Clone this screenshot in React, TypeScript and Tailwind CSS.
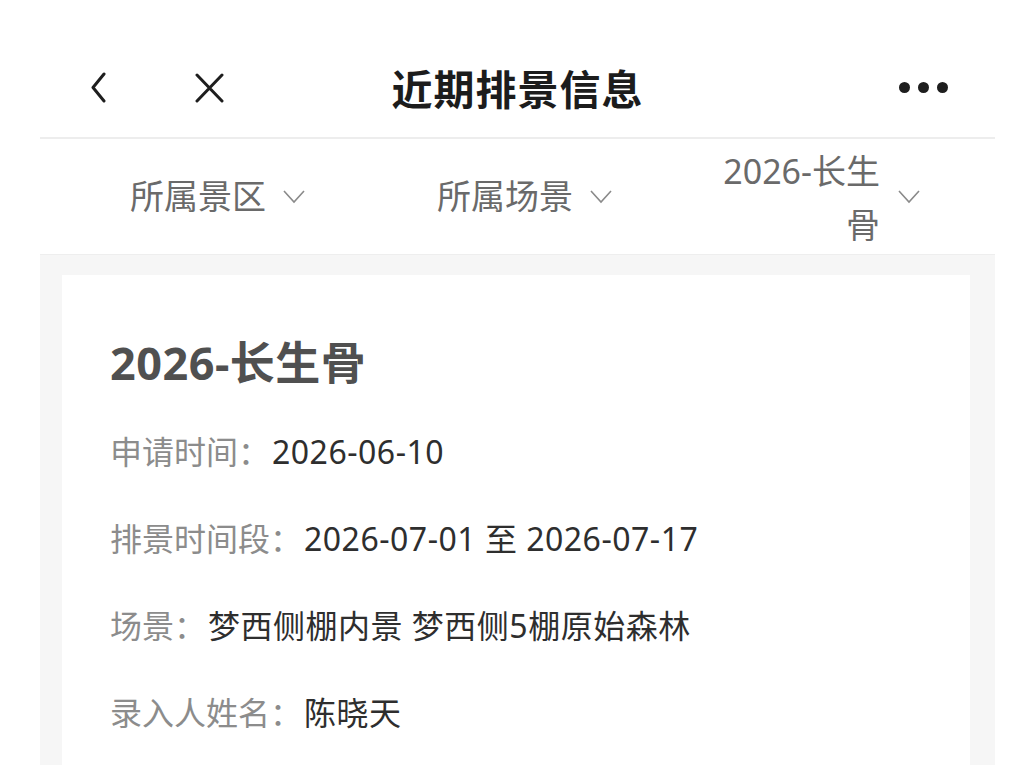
import React from "react";

const font = {
  fontFamily: '"Noto Sans", "Noto Sans CJK SC", sans-serif',
};

function Chevron() {
  return (
    <svg width="22" height="14" viewBox="0 0 22 14" className="shrink-0">
      <polyline points="1,1 11,12 21,1" fill="none" stroke="#8a8a8a" strokeWidth="1.6" />
    </svg>
  );
}

function Row({ label, value }: { label: string; value: string }) {
  return (
    <div className="flex items-center h-[87px] text-[32px] whitespace-nowrap">
      <span className="text-[#8c8c8c]">{label}</span>
      <span className="text-[#2e2e2e] ml-[2px] tracking-[0.5px]">{value}</span>
    </div>
  );
}

export default function App() {
  return (
    <div className="w-[1032px] h-[765px] bg-white overflow-hidden" style={font}>
      <div className="ml-[40px] w-[955px] flex flex-col h-full">
        {/* header */}
        <div className="relative h-[139px] flex items-center shrink-0 border-b-2 border-[#ededed]">
          <div className="flex items-center pl-[50px] gap-[88px] pt-[38px]">
            <svg width="16" height="31" viewBox="0 0 16 31">
              <polyline points="14,2 3,15.5 14,29" fill="none" stroke="#1e1e1e" strokeWidth="3" strokeLinecap="round" strokeLinejoin="round" />
            </svg>
            <svg width="31" height="30" viewBox="0 0 31 30">
              <path d="M3 2 L28 28 M28 2 L3 28" fill="none" stroke="#1e1e1e" strokeWidth="3" strokeLinecap="round" />
            </svg>
          </div>
          <div className="absolute left-0 right-0 top-[60px] text-center text-[41px] leading-[58px] tracking-[1px] font-bold text-[#1c1c1c] pointer-events-none">
            近期排景信息
          </div>
          <div className="ml-auto mr-[47px] pt-[38px] flex items-center gap-[8px]">
            <span className="w-[11px] h-[11px] rounded-full bg-[#1e1e1e]" />
            <span className="w-[11px] h-[11px] rounded-full bg-[#1e1e1e]" />
            <span className="w-[11px] h-[11px] rounded-full bg-[#1e1e1e]" />
          </div>
        </div>
        {/* filters */}
        <div className="flex h-[115px] shrink-0 text-[34px] text-[#6a6a6a]">
          <div className="flex items-center pl-[90px] gap-[17px] w-[318px]">
            <span className="whitespace-nowrap">所属景区</span>
            <Chevron />
          </div>
          <div className="flex items-center pl-[79px] gap-[17px] w-[318px]">
            <span className="whitespace-nowrap">所属场景</span>
            <Chevron />
          </div>
          <div className="flex items-center pl-[28px] gap-[18px] flex-1">
            <span className="w-[176px] text-right leading-[54px] pt-[2px]">2026-长生骨</span>
            <Chevron />
          </div>
        </div>
        {/* content area */}
        <div className="flex-1 bg-[#f6f6f6] pt-[20px] pl-[22px] pr-[25px] border-t border-[#eeeeee]">
          <div className="bg-white h-full pl-[48px] pt-[62px]">
            <div className="text-[45px] leading-[52px] tracking-[0.5px] font-bold text-[#505050] mb-[19px]">2026-长生骨</div>
            <Row label="申请时间：" value="2026-06-10" />
            <Row label="排景时间段：" value="2026-07-01 至 2026-07-17" />
            <Row label="场景：" value="梦西侧棚内景 梦西侧5棚原始森林" />
            <Row label="录入人姓名：" value="陈晓天" />
          </div>
        </div>
      </div>
    </div>
  );
}
